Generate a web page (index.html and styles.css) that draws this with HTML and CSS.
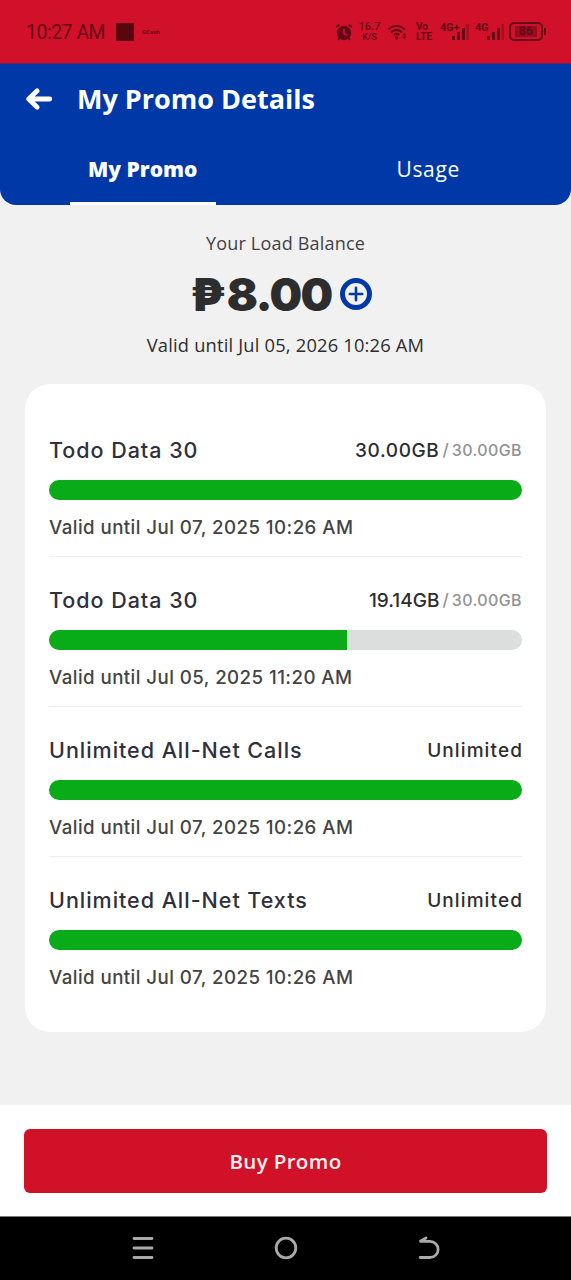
FILE: index.html
```html
<!DOCTYPE html>
<html lang="en">
<head>
<meta charset="utf-8">
<title>My Promo Details</title>
<link rel="stylesheet" href="styles.css">
</head>
<body>
<div class="status">
  <span class="clock">10:27 AM</span>
  <span class="notif-square"></span>
  <span class="notif-app">GCash</span>
  <div class="status-icons">
    <svg class="alarm" width="18" height="18" viewBox="0 0 18 18"><circle cx="9" cy="10" r="7.2"/><path class="line" d="M1.2 4.2 4.4 1.6M16.8 4.2 13.6 1.6M4.5 15 3 16.8M13.5 15 15 16.8"/><path class="hand" d="M9 6v4.3l3 2"/></svg>
    <span class="stack rate"><b>16.7</b><b class="unit">K/S</b></span>
    <svg class="wifi" width="21" height="18" viewBox="0 0 21 18"><path class="arc" d="M1.3 6.2q8.2-6.8 16.4 0M4 9.2q5.5-4.6 11 0M6.8 12q2.7-2.2 5.4 0"/><circle cx="9.5" cy="14.7" r="1.7"/><path d="m15.3 12.3 2-2.3 2 2.3zM15.3 13.5l2 2.5 2-2.5z"/></svg>
    <span class="stack volte"><b>Vo</b><b>LTE</b></span>
    <div class="signal"><b>4G+</b><svg width="18" height="17" viewBox="0 0 18 17"><path d="M1 13h3v4H1zM6 9h3v8H6zM11 5h3v12h-3z"/><path class="faint" d="M15.5 1H18v16h-2.5z"/></svg></div>
    <div class="signal"><b>4G</b><svg width="18" height="17" viewBox="0 0 18 17"><path d="M1 13h3v4H1zM6 9h3v8H6zM11 5h3v12h-3z"/><path class="faint" d="M15.5 1H18v16h-2.5z"/></svg></div>
    <div class="battery"><span>86</span></div>
  </div>
</div>
<header class="header">
  <div class="title-row">
    <svg class="back" width="26" height="22" viewBox="0 0 26 22"><path d="M11.2 2.8 2.6 11l8.6 8.2M3 11h20.8"/></svg>
    <h1 class="title">My Promo Details</h1>
  </div>
  <nav class="tabs">
    <div class="tab active">My Promo</div>
    <div class="tab usage">Usage</div>
  </nav>
</header>
<main class="content">
  <section class="balance">
    <p class="balance-label">Your Load Balance</p>
    <div class="amount-row">
      <span class="amount"><span class="peso">₱</span>8.00</span>
      <svg class="add" width="32" height="32" viewBox="0 0 32 32"><circle class="ring" cx="16" cy="16" r="13.5"/><path class="cross" d="M16 9.8v12.4M9.8 16h12.4"/></svg>
    </div>
    <p class="balance-valid">Valid until Jul 05, 2026 10:26 AM</p>
  </section>
  <section class="card">
    <article class="promo">
      <div class="head"><h2>Todo Data 30</h2><div class="quota"><span class="left">30.00GB</span><span class="slash">/</span><span class="total">30.00GB</span></div></div>
      <div class="bar"><div class="fill" style="width:100%"></div></div>
      <p class="valid">Valid until Jul 07, 2025 10:26 AM</p>
    </article>
    <article class="promo">
      <div class="head"><h2>Todo Data 30</h2><div class="quota"><span class="left tight">19.14GB</span><span class="slash">/</span><span class="total">30.00GB</span></div></div>
      <div class="bar"><div class="fill" style="width:63.1%"></div></div>
      <p class="valid">Valid until Jul 05, 2025 11:20 AM</p>
    </article>
    <article class="promo">
      <div class="head"><h2>Unlimited All-Net Calls</h2><div class="quota"><span class="left unlimited">Unlimited</span></div></div>
      <div class="bar"><div class="fill" style="width:100%"></div></div>
      <p class="valid">Valid until Jul 07, 2025 10:26 AM</p>
    </article>
    <article class="promo">
      <div class="head"><h2>Unlimited All-Net Texts</h2><div class="quota"><span class="left unlimited">Unlimited</span></div></div>
      <div class="bar"><div class="fill" style="width:100%"></div></div>
      <p class="valid">Valid until Jul 07, 2025 10:26 AM</p>
    </article>
  </section>
</main>
<footer class="footer"><button class="buy">Buy Promo</button></footer>
<div class="navbar">
  <svg width="22" height="24" viewBox="0 0 22 24"><path d="M2 2.5h18M2 12h18M2 21.5h18"/></svg>
  <svg width="24" height="24" viewBox="0 0 24 24"><circle cx="12" cy="12" r="9.8"/></svg>
  <svg width="22" height="24" viewBox="0 0 22 24"><path d="M8 2 2.5 5.3H12a8 8 0 0 1 0 16.2H2.2"/></svg>
</div>
</body>
</html>
```

FILE: styles.css
```css
* { box-sizing: border-box; }
body { margin: 0; width: 571px; height: 1280px; display: flex; flex-direction: column; background: #f1f1f1; font-family: "Open Sans", sans-serif; overflow: hidden; }
h1, h2, p { margin: 0; white-space: nowrap; }
svg { display: block; flex: none; overflow: visible; }
span, b { white-space: nowrap; }

.status { height: 64px; flex: none; background: #d11129; border-bottom: 1px solid #792052; color: #660817; display: flex; align-items: center; padding: 0 28px 0 26px; font-family: Roboto, sans-serif; }
.clock { font-size: 19.5px; width: 90px; letter-spacing: -0.5px; padding-top: 2px; }
.notif-square { width: 18px; height: 18px; background: #5a0611; }
.notif-app { font-size: 6px; font-weight: 700; margin-left: 8px; }
.status-icons { margin-left: auto; display: flex; align-items: center; fill: #660817; }
.alarm .line { stroke: #660817; stroke-width: 2; fill: none; }
.alarm .hand { stroke: #d11129; stroke-width: 1.6; fill: none; }
.stack { display: flex; flex-direction: column; align-items: center; line-height: 10px; font-size: 11px; font-weight: 500; }
.stack b { font-weight: 500; }
.rate { margin-left: 6px; width: 21px; }
.rate .unit { font-size: 9px; }
.wifi { margin-left: 7px; }
.wifi .arc { fill: none; stroke: #660817; stroke-width: 2; }
.volte { margin-left: 8px; width: 18px; font-size: 10px; line-height: 9.5px; align-items: flex-start; }
.stack.volte b { font-weight: 700; }
.signal { position: relative; width: 29px; height: 18px; margin-left: 6px; padding-bottom: 1px; display: flex; align-items: flex-end; justify-content: flex-end; }
.signal b { position: absolute; left: 0; top: -1px; font-size: 11px; line-height: 11px; font-weight: 700; letter-spacing: -0.2px; }
.faint { fill: #a50d21; }
.battery { position: relative; width: 34px; height: 19px; border: 2px solid #660817; border-radius: 5px; margin-left: 5px; padding: 2px; font-size: 12px; line-height: 11px; text-align: center; font-weight: 700; }
.battery span { display: block; width: 22px; background: #960d20; margin: auto; }
.battery::after { content: ""; position: absolute; right: -5px; top: 4px; width: 2px; height: 7px; background: #660817; }

.header { height: 141px; flex: none; background: #0038a8; border-radius: 0 0 16px 16px; color: #fff; display: flex; flex-direction: column; }
.title-row { display: flex; align-items: center; height: 70px; padding-left: 26px; gap: 25px; }
.back { fill: none; stroke: #fff; stroke-width: 4.8; stroke-linecap: round; stroke-linejoin: round; }
.title { font-size: 27px; font-weight: 700; padding-bottom: 2px; }
.tabs { display: grid; grid-template-columns: 1fr 1fr; flex: 1; }
.tab { display: flex; justify-content: center; align-items: center; font-size: 21px; height: 71px; padding-bottom: 1px; }
.tab.active { width: 146px; justify-self: center; font-weight: 800; border-bottom: 3px solid #fff; padding: 1px 0 0; }
.usage { letter-spacing: 0.7px; font-weight: 500; }

.content { flex: 1; padding: 0 25px; }
.balance { display: flex; flex-direction: column; align-items: center; height: 179px; padding-top: 24px; color: #2d2d2d; }
.balance-label { font-size: 18px; line-height: 28px; color: #414149; letter-spacing: 0.2px; font-weight: 500; }
.amount-row { display: flex; align-items: center; height: 74px; gap: 9px; margin-right: 8px; }
.amount { font: 900 46px/74px Inter, sans-serif; letter-spacing: -1.7px; }
.peso { margin-right: 3px; }
.add { fill: none; stroke: #0038a8; stroke-width: 5; }
.add .cross { stroke-width: 2.6; stroke-linecap: round; }
.balance-valid { font-size: 18.3px; line-height: 28px; letter-spacing: 0.2px; font-weight: 500; }

.card { background: #fff; border-radius: 25px; height: 648px; padding: 23px 24px 0; font-family: Inter, sans-serif; }
.promo { height: 150px; padding-top: 31px; border-bottom: 1px solid #eeeeef; }
.promo:last-child { border: 0; }
.head { display: flex; align-items: center; justify-content: space-between; height: 24px; }
.head h2 { font-size: 21.5px; font-weight: 550; color: #30303d; letter-spacing: 0.97px; }
.quota { display: flex; align-items: center; color: #929292; font-weight: 550; }
.left { color: #2d2d2d; font-size: 19px; letter-spacing: 0.6px; }
.tight { letter-spacing: 0; }
.unlimited { letter-spacing: 1.1px; margin-right: -1px; }
.slash { font-size: 17px; margin: 0 3px; }
.total { font-size: 16px; letter-spacing: 0.4px; }
.bar { height: 20px; margin-top: 18px; border-radius: 10px; background: #dcdedd; overflow: hidden; }
.fill { height: 100%; background: #09ab18; }
.valid { font-size: 18.7px; line-height: 24px; margin-top: 16px; font-weight: 550; color: #444; letter-spacing: 0.44px; }

.footer { height: 111px; flex: none; background: #fff; padding: 24px; }
.buy { display: block; width: 100%; height: 64px; border: 0; border-radius: 6px; background: #d01127; color: #fff0f0; font: 650 20.5px "Open Sans", sans-serif; letter-spacing: 0.35px; padding-top: 1px; }
.navbar { height: 64px; flex: none; background: #000; border-top: 1px solid #777; display: flex; justify-content: center; align-items: center; gap: 120px; padding: 0 0 1px; fill: none; stroke: #aaa; stroke-width: 2.8; stroke-linecap: round; stroke-linejoin: round; }
```
